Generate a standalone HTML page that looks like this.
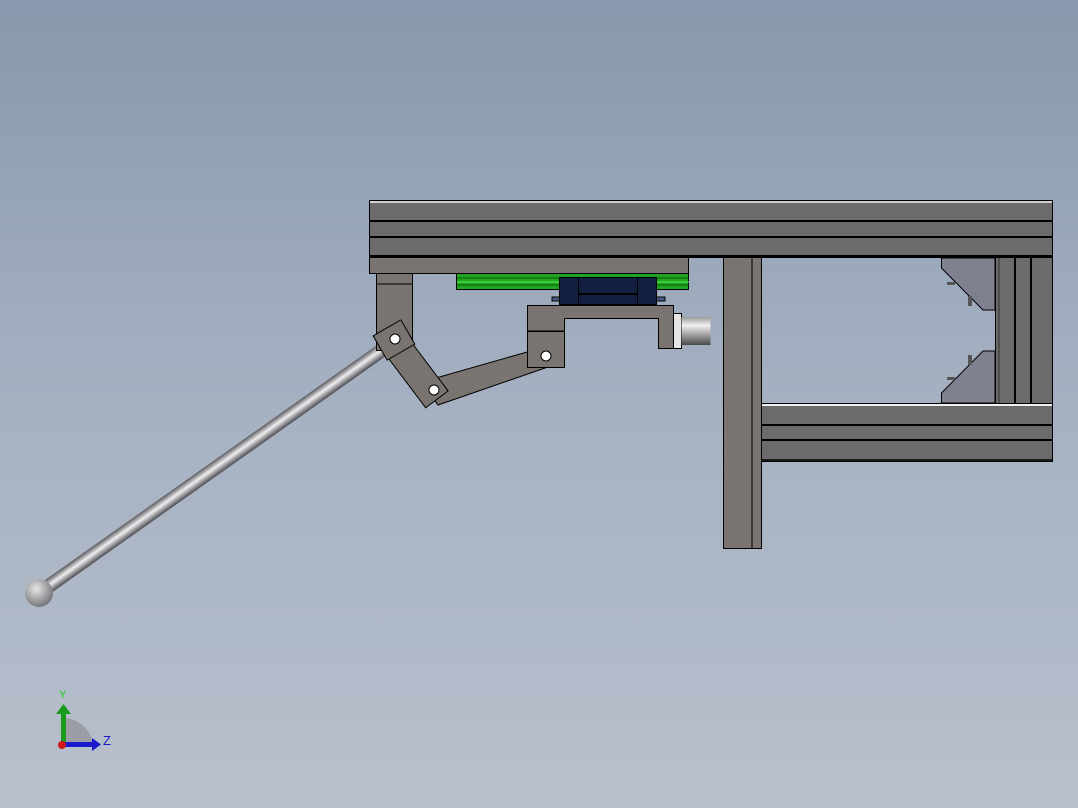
<!DOCTYPE html>
<html><head><meta charset="utf-8"><style>
html,body{margin:0;padding:0;width:1078px;height:808px;overflow:hidden}
body{background:linear-gradient(#8798ad 0%,#a3afc0 45%,#b9c0cd 100%)}
svg{position:absolute;left:0;top:0}
</style></head><body>
<svg width="1078" height="808" viewBox="0 0 1078 808" xmlns="http://www.w3.org/2000/svg">
<defs>
<linearGradient id="rod" x1="0" y1="0" x2="0" y2="1"><stop offset="0" stop-color="#5a5a5e"/><stop offset="0.45" stop-color="#f0f0f2"/><stop offset="1" stop-color="#4a4a50"/></linearGradient>
<radialGradient id="ball" cx="0.4" cy="0.35" r="0.7"><stop offset="0" stop-color="#e6e6e8"/><stop offset="1" stop-color="#6e6e72"/></radialGradient>
<linearGradient id="cyl" x1="0" y1="0" x2="0" y2="1"><stop offset="0" stop-color="#9a9a9a"/><stop offset="0.3" stop-color="#f2f0ee"/><stop offset="1" stop-color="#4a4a4a"/></linearGradient>
</defs>
<g stroke="#000" stroke-width="1">
<g transform="translate(39,593) rotate(-35.3)"><rect x="0" y="-7" width="432" height="14" fill="url(#rod)" stroke="none"/></g>
<circle cx="39" cy="593" r="14" fill="url(#ball)" stroke="none"/>
<rect x="369.5" y="200.5" width="683" height="57" fill="#6b6b6b"/>
<rect x="370" y="201" width="682" height="2" fill="#cfcfcf" stroke="none"/>
<line x1="369" y1="221" x2="1053" y2="221" stroke-width="2"/>
<line x1="369" y1="237" x2="1053" y2="237" stroke-width="2"/>
<line x1="369" y1="256" x2="1053" y2="256" stroke-width="2"/>
<rect x="369.5" y="257.5" width="319" height="16" fill="#79746f"/>
<rect x="456.5" y="273.5" width="232" height="16" fill="#1fa51f"/>
<line x1="457" y1="278" x2="689" y2="278" stroke="#0a5a0a"/>
<line x1="457" y1="282" x2="689" y2="282" stroke="#5cf05c"/>
<line x1="457" y1="285" x2="689" y2="285" stroke="#0a5a0a"/>
<rect x="552" y="297" width="113" height="4" fill="#4a5a80"/>
<rect x="559.5" y="277.5" width="19" height="27" fill="#142040"/>
<rect x="637.5" y="277.5" width="19" height="27" fill="#142040"/>
<rect x="578.5" y="277.5" width="59" height="27" fill="#142040"/>
<line x1="578" y1="294" x2="638" y2="294" stroke-width="2"/>
<path d="M527.5 305.5H673.5V348.5H658.5V318.5H564.5V367.5H527.5Z" fill="#79746f"/>
<line x1="527" y1="331" x2="564" y2="331"/>
<rect x="673.5" y="313.5" width="8" height="35" fill="#e8e6e4"/>
<rect x="681.5" y="317" width="29" height="28" fill="url(#cyl)" stroke="none"/>
<rect x="376.5" y="273.5" width="36" height="77" fill="#79746f"/>
<line x1="377" y1="284" x2="412" y2="284"/>
<polygon points="422,382 527,352 548,367 438,405" fill="#79746f"/>
<rect x="527.5" y="331.5" width="37" height="36" fill="#79746f"/>
<circle cx="546" cy="356" r="5" fill="#fff"/>
<g transform="translate(414,369) rotate(53)"><rect x="-38" y="-14" width="76" height="28" fill="#79746f"/></g>
<g transform="translate(394,340) rotate(-30)"><rect x="-16" y="-14" width="32" height="28" fill="#79746f"/></g>
<circle cx="395" cy="339" r="5" fill="#fff"/>
<circle cx="434" cy="390" r="5" fill="#fff"/>
<rect x="723.5" y="257.5" width="38" height="291" fill="#79746f"/>
<line x1="752" y1="258" x2="752" y2="548"/>
<rect x="995.5" y="257.5" width="57" height="146" fill="#6b6b6b"/>
<line x1="1015" y1="258" x2="1015" y2="403" stroke-width="2"/>
<line x1="1031" y1="258" x2="1031" y2="403" stroke-width="2"/>
<line x1="999" y1="258" x2="999" y2="403" stroke="#333"/>
<polygon points="941.5,258 995,258 995,310 983,310 941.5,268" fill="#7f8090"/>
<polygon points="941.5,403 995,403 995,351 983,351 941.5,393" fill="#7f8090"/>
<rect x="947" y="282" width="8" height="3" fill="#555" stroke="none"/>
<rect x="968" y="296" width="4" height="10" fill="#555" stroke="none"/>
<rect x="947" y="377" width="8" height="3" fill="#555" stroke="none"/>
<rect x="968" y="355" width="4" height="10" fill="#555" stroke="none"/>
<rect x="761.5" y="403.5" width="291" height="58" fill="#6b6b6b"/>
<rect x="762" y="404" width="290" height="2" fill="#f0f0f0" stroke="none"/>
<line x1="761" y1="425" x2="1053" y2="425" stroke-width="2"/>
<line x1="761" y1="440" x2="1053" y2="440" stroke-width="2"/>
<line x1="761" y1="460" x2="1053" y2="460" stroke-width="1.5"/>
</g>
<path d="M63 745 V718 A30 30 0 0 1 93 745 Z" fill="#9a9da4"/>
<rect x="61" y="712" width="5" height="33" fill="#1a9a1a"/>
<polygon points="56,714 63.5,704 71,714" fill="#1a9a1a"/>
<rect x="63" y="742" width="30" height="5" fill="#1a1acc"/>
<polygon points="92,738 101,744.5 92,751" fill="#1a1acc"/>
<circle cx="62" cy="745" r="4" fill="#cc1a1a"/>
<text x="59" y="698" font-family="Liberation Sans,sans-serif" font-size="11" fill="#1fd01f">Y</text>
<text x="103" y="745" font-family="Liberation Sans,sans-serif" font-size="13" fill="#1a1acc">Z</text>
</svg>
</body></html>
